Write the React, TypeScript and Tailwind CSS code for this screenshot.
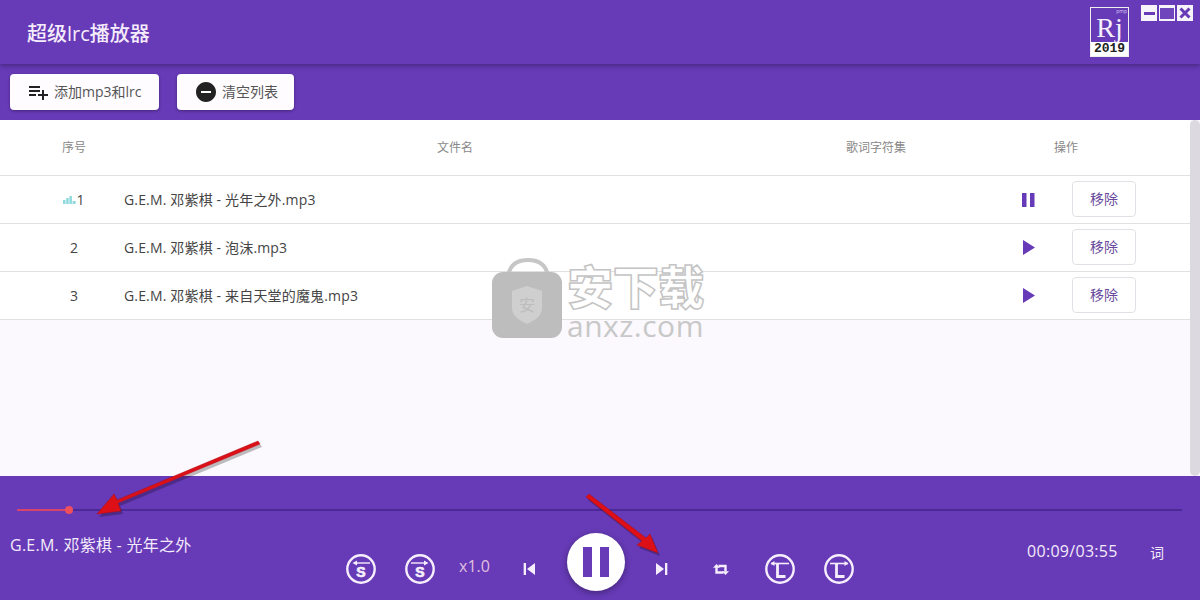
function Glyph({ d, size = 24, className = "" }: { d: string; size?: number; className?: string }) {
  return (
    <svg width={size} height={size} viewBox="0 0 24 24" className={className} fill="currentColor">
      <path d={d} />
    </svg>
  );
}

function SpeedIcon({ dir }: { dir: "left" | "right" }) {
  return (
    <svg width="30" height="30" viewBox="0 0 30 30" className="shrink-0">
      <circle cx="15" cy="15" r="13.7" fill="none" stroke="#f6eefc" strokeWidth="2.4" />
      {dir === "left" ? (
        <>
          <path d="M8 9H24" stroke="#f6eefc" strokeWidth="1.4" />
          <path d="M6.500 9L11 6.500V11.500Z" fill="#f6eefc" />
        </>
      ) : (
        <>
          <path d="M6 9H22" stroke="#f6eefc" strokeWidth="1.4" />
          <path d="M23.500 9L19 6.500V11.500Z" fill="#f6eefc" />
        </>
      )}
      <text x="15" y="23" textAnchor="middle" fontSize="14" fontWeight="700" fill="#f6eefc" stroke="#f6eefc" strokeWidth="0.7" fontFamily="'Liberation Sans', sans-serif">S</text>
    </svg>
  );
}

function LyricIcon({ dir }: { dir: "left" | "right" }) {
  return (
    <svg width="30" height="30" viewBox="0 0 30 30" className="shrink-0">
      <circle cx="15" cy="15" r="13.7" fill="none" stroke="#f6eefc" strokeWidth="2.4" />
      <path d="M6 9.500H24" stroke="#f6eefc" strokeWidth="1.6" />
      {dir === "left" ? <path d="M5.500 9.500L9.500 7V12Z" fill="#f6eefc" /> : <path d="M24.500 9.500L20.500 7V12Z" fill="#f6eefc" />}
      <path d="M12.500 9.500V22.500H20.500" fill="none" stroke="#f6eefc" strokeWidth="2.800" />
    </svg>
  );
}

function Row({ n, name, playing }: { n: number; name: string; playing?: boolean }) {
  return (
    <div className="grid grid-cols-[100px_662px_180px_200px] h-12 pl-6 pb-[1px] items-center border-b border-[#e0e0e0] text-sm text-[#444]">
      <div className="flex items-center justify-center pt-[1px]">
        {playing && (
          <svg width="13" height="8" viewBox="0 0 13 8" className="shrink-0" fill="#8fdadd">
            <rect x="0" y="4" width="2.500" height="4" />
            <rect x="3.200" y="2" width="2.500" height="6" />
            <rect x="6.400" y="0" width="2.500" height="8" />
            <rect x="9.600" y="5" width="3" height="3" />
          </svg>
        )}
        <span>{n}</span>
      </div>
      <div className="tracking-[0.16px] pt-[1px]">{name}</div>
      <div />
      <div className="flex items-center pl-[54px]">
        <div className="w-4 mt-[1px] flex justify-center text-[#673ab7]">
          {playing ? (
            <svg width="13" height="14" viewBox="0 0 13 14" fill="currentColor">
              <rect x="0" y="0" width="4.500" height="14" />
              <rect x="8" y="0" width="4.500" height="14" />
            </svg>
          ) : (
            <svg width="12" height="15" viewBox="0 0 12 15" fill="currentColor" className="ml-[2px]">
              <path d="M0 0L12 7.500L0 15Z" />
            </svg>
          )}
        </div>
        <button className="ml-9 w-16 h-9 rounded border border-[#e2e0e6] bg-white text-[#6a4a9c] text-sm">移除</button>
      </div>
    </div>
  );
}

export default function App() {
  return (
    <div
      className="relative w-[1200px] h-[600px] overflow-hidden bg-[#fbf9fd] flex flex-col"
      style={{ fontFamily: "'Open Sans', 'Noto Sans CJK SC', sans-serif" }}
    >
      <header className="relative z-10 h-16 shrink-0 bg-[#673ab7] shadow-[0_2px_5px_rgba(0,0,0,0.3)] flex items-start">
        <h1 className="ml-[27px] mt-5 text-xl leading-7 text-[#f5ecfb] font-medium">超级lrc播放器</h1>
        <div className="ml-auto flex items-start mr-[7px]">
          <div className="mt-[7px] w-[39px] h-[50px] border border-[#eee] flex flex-col relative">
            <span className="absolute right-[1px] top-0 text-[5px] leading-[6px] text-[#d8c8ee]">pmp</span>
            <div className="h-[35px] flex items-start justify-center text-[28px] leading-[26px] text-[#f5f0fa] pt-[7px]" style={{ fontFamily: "'Liberation Serif', serif" }}>Rj</div>
            <div className="flex-1 bg-white text-[13px] leading-[14px] font-bold text-center text-[#222]" style={{ fontFamily: "'Liberation Mono', monospace" }}>2019</div>
          </div>
          <div className="ml-3 mt-[5px] flex gap-[2px]">
            <div className="w-4 h-4 bg-[#f7f3fb] flex items-center justify-center">
              <div className="w-[11px] h-[3px] bg-[#673ab7]" />
            </div>
            <div className="w-4 h-4 bg-[#f7f3fb] flex items-center justify-center">
              <div className="w-[14px] h-[11px] bg-[#6f46bb]" />
            </div>
            <div className="w-4 h-4 bg-[#f7f3fb] flex items-center justify-center">
              <svg width="12" height="12" viewBox="0 0 12 12" stroke="#673ab7" strokeWidth="3">
                <path d="M1.500 1.500L10.500 10.500M10.500 1.500L1.500 10.500" />
              </svg>
            </div>
          </div>
        </div>
      </header>

      <div className="h-14 shrink-0 bg-[#673ab7] flex items-start pt-[10px] pl-[10px] gap-[18px]">
        <button className="w-[149px] h-9 bg-[#fffcff] rounded shadow-[0_1px_3px_rgba(0,0,0,0.35)] flex items-center pl-[16px] text-sm text-[#555]">
          <Glyph size={24} className="text-[#222] shrink-0" d="M14 10H3v2h11v-2zm0-4H3v2h11V6zm4 8v-4h-2v4h-4v2h4v4h2v-4h4v-2h-4zM3 16h7v-2H3v2z" />
          <span className="ml-[4px]">添加mp3和lrc</span>
        </button>
        <button className="w-[117px] h-9 bg-[#fffcff] rounded shadow-[0_1px_3px_rgba(0,0,0,0.35)] flex items-center pl-[17px] text-sm text-[#555]">
          <Glyph size={24} className="text-[#222] shrink-0" d="M12 2C6.480 2 2 6.480 2 12s4.480 10 10 10 10-4.480 10-10S17.520 2 12 2zm5 11H7v-2h10v2z" />
          <span className="ml-1">清空列表</span>
        </button>
      </div>

      <main className="flex-1 flex min-h-0">
        <div className="w-[1190px] flex flex-col">
          <div className="bg-white">
            <div className="grid grid-cols-[100px_662px_180px_200px] h-14 pl-6 items-center text-center border-b border-[#e0e0e0] text-xs text-[#888]">
              <div>序号</div>
              <div>文件名</div>
              <div>歌词字符集</div>
              <div>操作</div>
            </div>
            <Row n={1} name="G.E.M. 邓紫棋 - 光年之外.mp3" playing />
            <Row n={2} name="G.E.M. 邓紫棋 - 泡沫.mp3" />
            <Row n={3} name="G.E.M. 邓紫棋 - 来自天堂的魔鬼.mp3" />
          </div>
        </div>
        <div className="w-[10px] bg-[#dcdae0] rounded-[5px]" />
      </main>

      <footer className="h-[124px] shrink-0 bg-[#673ab7] relative z-10 pt-[33px]">
        <div className="relative mx-[17px] h-[2px] w-[1165px] bg-[#4b2a96] flex items-center">
          <div className="h-[2px] w-[52px] bg-[#d9456a]" />
          <div className="w-2 h-2 -ml-1 rounded-full bg-[#ef4f5c] shrink-0" />
        </div>
        <div className="flex items-start mt-[23px] pl-[10px]">
          <div className="w-[336px] shrink-0 text-base leading-[22px] tracking-[0.25px] text-[#f3eafa] whitespace-nowrap">G.E.M. 邓紫棋 - 光年之外</div>
          <div className="flex items-start shrink-0 text-[#f6eefc]">
            <div className="mt-5"><SpeedIcon dir="left" /></div>
            <div className="mt-5 ml-[29px]"><SpeedIcon dir="right" /></div>
            <div className="mt-[22px] ml-6 w-[31px] text-base leading-[20px] text-[#e0c0e0] whitespace-nowrap">x1.0</div>
            <Glyph size={16} className="mt-[27px] ml-[31px]" d="M4 3h3.500v18H4zm5 9L21 3v18z" />
            <div className="ml-[30px] w-[58px] h-[58px] rounded-full bg-white shadow-[0_2px_6px_rgba(0,0,0,0.35)] flex items-center justify-center gap-[8px] -mt-[1px]">
              <div className="w-[9px] h-[30px] bg-[#673ab7]" />
              <div className="w-[9px] h-[30px] bg-[#673ab7]" />
            </div>
            <Glyph size={16} className="mt-[27px] ml-[29px]" d="M3 3l12 9-12 9zM16.500 3H20v18h-3.500z" />
            <svg width="16" height="11" viewBox="0 0 16 11" className="mt-[30px] ml-[43px]" fill="none" stroke="currentColor" strokeWidth="2.400">
              <path d="M3.500 3V8.500H10.500" />
              <path d="M5.500 2H12.500V7.500" />
              <path d="M0 3.800L3.500 0L7 3.800Z" fill="currentColor" stroke="none" />
              <path d="M9 7.200L12.500 11L16 7.200Z" fill="currentColor" stroke="none" />
            </svg>
            <div className="mt-5 ml-9"><LyricIcon dir="left" /></div>
            <div className="mt-5 ml-[29px]"><LyricIcon dir="right" /></div>
          </div>
          <div className="ml-[173px] mt-[6px] text-base leading-[22px] tracking-[0.3px] text-[#f3eafa] w-[90px] whitespace-nowrap">00:09/03:55</div>
          <div className="ml-[33px] mt-2 text-sm leading-[22px] text-[#f3eafa]">词</div>
        </div>
      </footer>

      <div className="absolute left-[492px] top-[258px] z-20 flex items-start pointer-events-none">
        <svg width="72" height="80" viewBox="0 0 72 80">
          <path d="M16 18C18 6 26 2 36 2S54 6 56 18" fill="none" stroke="#c6c6c6" strokeWidth="4" />
          <rect x="0" y="14" width="70" height="66" rx="11" fill="#bdbdbd" />
          <path d="M20 33L35 28L50 33V50C50 58 42 63 35 66C28 63 20 58 20 50Z" fill="#cfcfcf" />
          <text x="35" y="53" textAnchor="middle" fontSize="16" fill="#bdbdbd" fontFamily="'Noto Sans CJK SC', sans-serif">安</text>
        </svg>
        <div className="ml-[3px] flex flex-col items-center">
          <div className="text-[46px] leading-[46px] font-black tracking-[-0.5px] text-white [-webkit-text-stroke:1.5px_#c4c4c4] mt-[5px] whitespace-nowrap">安下载</div>
          <div className="text-[30px] leading-[28px] text-[#c8c8c8] tracking-[0.5px] mt-[3px]">anxz.com</div>
        </div>
      </div>

      <svg width="1200" height="600" viewBox="0 0 1200 600" className="absolute left-0 top-0 z-30 pointer-events-none">
        <g fill="#000" opacity="0.25" transform="translate(2 3)">
          <path d="M258 441L260 444L118 503L121 511L97 514L114 494L117 500Z" />
          <path d="M586 497L589 494L646 538L650 534L658 553L637 545L642 541Z" />
        </g>
        <g fill="#dd1018" stroke="#a80f18" strokeWidth="0.500">
          <path d="M258 441L260 444L118 503L121 511L97 514L114 494L117 500Z" />
          <path d="M586 497L589 494L646 538L650 534L658 553L637 545L642 541Z" />
        </g>
      </svg>
    </div>
  );
}
